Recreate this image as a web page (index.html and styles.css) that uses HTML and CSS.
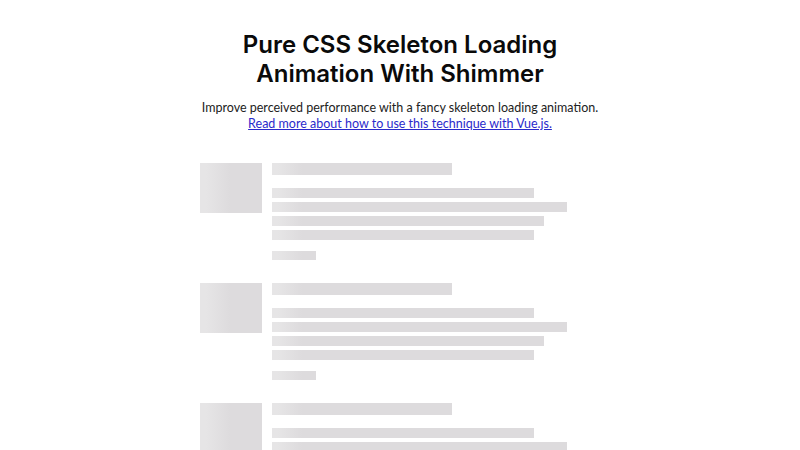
FILE: index.html
```html
<!DOCTYPE html>
<html lang="en">
<head>
    <meta charset="UTF-8">
    <title>Pure CSS Skeleton Loading Animation With Shimmer</title>
    <link rel="stylesheet" href="styles.css">
</head>
<body>
    <header class="intro">
        <h1>Pure CSS Skeleton Loading<br>Animation With Shimmer</h1>
        <p>
            Improve perceived performance with a fancy skeleton loading animation.<br>
            <a href="#">Read more about how to use this technique with Vue.js.</a>
        </p>
    </header>

    <ul class="blog-list">
        <li class="blog-post">
            <div class="skeleton blog-image"></div>
            <div class="blog-body">
                <div class="skeleton blog-title"></div>
                <div class="blog-text">
                    <div class="skeleton line" style="width: 80%"></div>
                    <div class="skeleton line" style="width: 90%"></div>
                    <div class="skeleton line" style="width: 83%"></div>
                    <div class="skeleton line" style="width: 80%"></div>
                </div>
                <div class="skeleton blog-link"></div>
            </div>
        </li>
        <li class="blog-post">
            <div class="skeleton blog-image"></div>
            <div class="blog-body">
                <div class="skeleton blog-title"></div>
                <div class="blog-text">
                    <div class="skeleton line" style="width: 80%"></div>
                    <div class="skeleton line" style="width: 90%"></div>
                    <div class="skeleton line" style="width: 83%"></div>
                    <div class="skeleton line" style="width: 80%"></div>
                </div>
                <div class="skeleton blog-link"></div>
            </div>
        </li>
        <li class="blog-post">
            <div class="skeleton blog-image"></div>
            <div class="blog-body">
                <div class="skeleton blog-title"></div>
                <div class="blog-text">
                    <div class="skeleton line" style="width: 80%"></div>
                    <div class="skeleton line" style="width: 90%"></div>
                    <div class="skeleton line" style="width: 83%"></div>
                    <div class="skeleton line" style="width: 80%"></div>
                </div>
                <div class="skeleton blog-link"></div>
            </div>
        </li>
    </ul>
</body>
</html>
```
FILE: styles.css
```css
body {
    font-family: Lato, "Noto Sans", sans-serif;
    color: #222;
    background: #fff;
    max-width: 400px;
    margin: 0 auto;
    padding: 30px 0 0;
}

.intro {
    text-align: center;
}
.intro h1 {
    font-family: Inter, "Liberation Sans", sans-serif;
    font-weight: 600;
    font-size: 24px;
    line-height: 29px;
    color: #0a0a0a;
    margin: 0 0 12px;
}
.intro p {
    font-size: 12.5px;
    line-height: 16px;
    margin: 0 -20px;
}
.intro a {
    color: #2a2acb;
}

.blog-list {
    list-style: none;
    margin: 31px 0 0;
    padding: 0;
}
.blog-post {
    display: flex;
    gap: 10px;
    margin-bottom: 23px;
}

/* grey block with a light shimmer at its left edge */
.skeleton {
    background: linear-gradient(90deg, #e6e5e6 0, #e6e5e6 6px, #dddbdd 30px, #dddbdd 100%);
}
.blog-image {
    flex: 0 0 62px;
    height: 50px;
}
.blog-body {
    flex: 1;
}
.blog-title {
    width: 55%;
    height: 12px;
    margin-bottom: 13px;
}
.blog-text {
    display: flex;
    flex-direction: column;
    gap: 4px;
}
.line {
    height: 10px;
}
.blog-link {
    width: 44px;
    height: 9px;
    margin-top: 11px;
}
```
